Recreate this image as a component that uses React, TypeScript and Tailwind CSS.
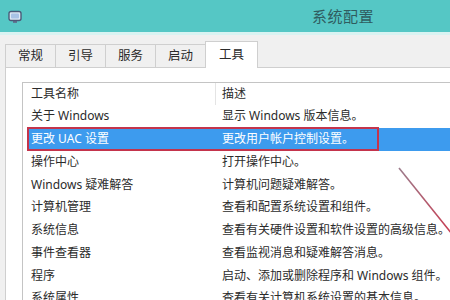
import React from "react";

const tabs = ["常规", "引导", "服务", "启动"];

const rows = [
  { name: "关于 Windows", desc: "显示 Windows 版本信息。" },
  { name: "更改 UAC 设置", desc: "更改用户帐户控制设置。", selected: true },
  { name: "操作中心", desc: "打开操作中心。" },
  { name: "Windows 疑难解答", desc: "计算机问题疑难解答。" },
  { name: "计算机管理", desc: "查看和配置系统设置和组件。" },
  { name: "系统信息", desc: "查看有关硬件设置和软件设置的高级信息。" },
  { name: "事件查看器", desc: "查看监视消息和疑难解答消息。" },
  { name: "程序", desc: "启动、添加或删除程序和 Windows 组件。" },
  { name: "系统属性", desc: "查看有关计算机系统设置的基本信息。" },
];

const font = "font-['Noto_Sans','Noto_Sans_CJK_SC',sans-serif]";

export default function App() {
  return (
    <div className={`relative w-[450px] h-[300px] overflow-hidden bg-[#f0f0f0] ${font}`}>
      {/* title bar */}
      <div className="flex items-center h-[32px] bg-[#55c7c5]">
        <svg width="14" height="14" viewBox="0 0 14 14" className="ml-[8px] mt-[1px]">
          <rect x="1" y="1.5" width="12" height="9" rx="2" fill="#dfe9f5" stroke="#4a5a78" strokeWidth="1.4" />
          <rect x="3" y="3.5" width="8" height="5" rx="1" fill="#a9c3e6" />
          <rect x="5" y="11" width="4" height="1.8" fill="#5c6a88" />
        </svg>
        <span className="ml-[290px] text-[15px] tracking-[0.5px] text-[#2f5c5f]">系统配置</span>
      </div>
      <div className="h-[3px] bg-[#d9f3f2]" />

      {/* tabs */}
      <div className="flex items-end h-[32px] pl-[5px]">
        {tabs.map((t) => (
          <div
            key={t}
            className="flex items-center justify-center w-[51px] h-[23px] -mr-px border border-b-0 border-[#cfcfcf] bg-[#f0f0f0] text-[12.5px] text-[#2a2a2a]"
          >
            {t}
          </div>
        ))}
        <div className="relative z-10 flex items-center justify-center w-[53px] h-[27px] -mb-px border border-b-0 border-[#cfcfcf] bg-white text-[12.5px] text-[#2a2a2a]">
          工具
        </div>
      </div>

      {/* panel */}
      <div className="ml-[5px] h-[240px] border-l border-t border-[#cfcfcf] bg-white pl-[16px] pt-[14px]">
        <div className="border-l border-t border-[#c4c4c4] h-[240px] text-[12px] text-[#2b2b2b]">
          <div className="flex h-[22px] items-center">
            <div className="w-[193px] pl-[8px] border-r border-[#e4e4e4] h-full flex items-center">工具名称</div>
            <div className="pl-[6px]">描述</div>
          </div>
          {rows.map((r) => (
            <div
              key={r.name}
              className={`flex h-[22.75px] items-center ml-[5px] whitespace-nowrap ${
                r.selected ? "bg-[#3d9bee] text-white" : ""
              }`}
            >
              <div className="w-[188px] pl-[3px]">{r.name}</div>
              <div className="pl-[6px]">{r.desc}</div>
            </div>
          ))}
        </div>
      </div>

      {/* annotation */}
      <div className="absolute left-[27px] top-[127px] w-[352px] h-[24px] border-2 border-[#c4344c]" />
      <svg className="absolute left-0 top-0" width="450" height="300">
        <defs>
          <linearGradient id="ln" x1="0" y1="0" x2="1" y2="1">
            <stop offset="0" stopColor="#9c7c8c" />
            <stop offset="1" stopColor="#c83a50" />
          </linearGradient>
        </defs>
        <line x1="399" y1="168" x2="452" y2="234" stroke="url(#ln)" strokeWidth="1.6" />
      </svg>
    </div>
  );
}
